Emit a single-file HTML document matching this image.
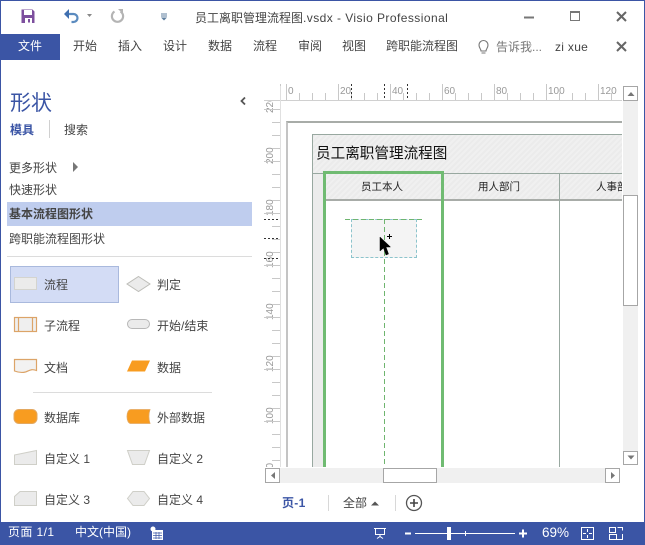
<!DOCTYPE html>
<html lang="zh"><head><meta charset="utf-8"><title>员工离职管理流程图</title>
<style>
html,body{margin:0;padding:0;width:645px;height:545px;overflow:hidden;background:#fff}
body{position:relative;font-family:"Liberation Sans","Noto Sans CJK SC",sans-serif;font-size:12px;color:#444}
.t{position:absolute;white-space:nowrap;line-height:16px;height:16px;margin-top:1px}
.b{position:absolute}
svg{position:absolute;left:0;top:0}
.hatch{background:repeating-linear-gradient(135deg,#ebebeb 0,#ebebeb 2px,#f0f0f0 2px,#f0f0f0 4px)}
.sb{position:absolute;box-sizing:border-box;background:#fff;border:1px solid #a6a6a6}
.rl{position:absolute;font-size:10px;color:#999;line-height:12px;white-space:nowrap}
.rv{position:absolute;font-size:10px;color:#999;line-height:12px;white-space:nowrap;transform:rotate(-90deg);transform-origin:0 0}
</style></head><body>

<!-- window frame -->
<div class="b" style="left:0;top:0;width:645px;height:1px;background:#3b55a5"></div>
<div class="b" style="left:0;top:0;width:1px;height:545px;background:#3b55a5"></div>
<div class="b" style="left:644px;top:0;width:1px;height:545px;background:#3b55a5"></div>

<!-- title bar -->
<div class="t" style="left:195px;top:9px;font-size:12px;color:#444">员工离职管理流程图<span style="letter-spacing:.44px">.vsdx - Visio Professional</span></div>
<div class="b" style="left:0;top:34px;width:60px;height:26px;background:#3b55a5;color:#fff;text-align:center;line-height:24px">文件</div>
<div class="t" style="left:73px;top:37px">开始</div>
<div class="t" style="left:118px;top:37px">插入</div>
<div class="t" style="left:163px;top:37px">设计</div>
<div class="t" style="left:208px;top:37px">数据</div>
<div class="t" style="left:253px;top:37px">流程</div>
<div class="t" style="left:298px;top:37px">审阅</div>
<div class="t" style="left:342px;top:37px">视图</div>
<div class="t" style="left:386px;top:37px">跨职能流程图</div>
<div class="t" style="left:496px;top:38px;color:#777">告诉我...</div>
<div class="t" style="left:555px;top:38px;letter-spacing:.3px">zi xue</div>

<!-- left pane -->
<div class="t" style="left:10px;top:90px;font-size:21px;line-height:26px;height:26px;color:#3b55a5">形状</div>
<div class="t" style="left:10px;top:121px;color:#3b55a5;font-weight:bold">模具</div>
<div class="b" style="left:49px;top:120px;width:1px;height:18px;background:#d0d0d0"></div>
<div class="t" style="left:64px;top:121px">搜索</div>
<div class="t" style="left:9px;top:159px">更多形状</div>
<div class="t" style="left:9px;top:181px">快速形状</div>
<div class="b" style="left:7px;top:202px;width:245px;height:24px;background:#bfcdee"></div>
<div class="t" style="left:9px;top:205px;font-weight:bold">基本流程图形状</div>
<div class="t" style="left:9px;top:230px">跨职能流程图形状</div>
<div class="b" style="left:7px;top:256px;width:245px;height:1px;background:#dcdcdc"></div>
<div class="b" style="left:10px;top:266px;width:109px;height:37px;box-sizing:border-box;background:#d3dcf5;border:1px solid #a9b9dd"></div>
<div class="t" style="left:44px;top:276px">流程</div>
<div class="t" style="left:157px;top:276px">判定</div>
<div class="t" style="left:44px;top:317px">子流程</div>
<div class="t" style="left:157px;top:317px">开始/结束</div>
<div class="t" style="left:44px;top:359px">文档</div>
<div class="t" style="left:157px;top:359px">数据</div>
<div class="b" style="left:33px;top:392px;width:179px;height:1px;background:#dcdcdc"></div>
<div class="t" style="left:44px;top:409px">数据库</div>
<div class="t" style="left:157px;top:409px">外部数据</div>
<div class="t" style="left:44px;top:450px">自定义 1</div>
<div class="t" style="left:157px;top:450px">自定义 2</div>
<div class="t" style="left:44px;top:491px">自定义 3</div>
<div class="t" style="left:157px;top:491px">自定义 4</div>

<!-- page / canvas -->
<div class="b" style="left:286px;top:121px;width:336px;height:346px;background:#fff;border-top:2px solid #a8aca8;border-left:2px solid #c4c4c4;box-sizing:border-box"></div>
<div class="b" style="left:312px;top:134px;width:310px;height:333px;box-sizing:border-box;border-left:1px solid #98a8a0;border-top:1px solid #98a8a0;background:#fff"></div>
<div class="b hatch" style="left:313px;top:135px;width:309px;height:38px"></div>
<div class="b" style="left:313px;top:173px;width:309px;height:1px;background:#98a8a0"></div>
<div class="b" style="left:313px;top:174px;width:11px;height:293px;background:#ececec"></div>
<div class="b hatch" style="left:324px;top:174px;width:298px;height:25px"></div>
<div class="b" style="left:324px;top:199px;width:298px;height:2px;background:#a8aca8"></div>
<div class="b" style="left:559px;top:174px;width:1px;height:293px;background:#98a8a0"></div>
<div class="t" style="left:316px;top:144px;font-size:14.6px;line-height:19px;height:19px;color:#111">员工离职管理流程图</div>
<div class="b" style="left:323px;top:171px;width:121px;height:296px;box-sizing:border-box;border:3px solid #70bb72;border-bottom:0"></div>
<div class="t" style="left:361px;top:178px;font-size:10.5px;color:#222">员工本人</div>
<div class="t" style="left:478px;top:178px;font-size:10.5px;color:#222">用人部门</div>
<div class="b" style="left:596px;top:179px;width:26px;height:16px;overflow:hidden"><div class="t" style="left:0;top:-1px;font-size:10.5px;color:#222">人事部</div></div>
<div class="b" style="left:351px;top:219px;width:66px;height:39px;box-sizing:border-box;background:#f4f4f4;border:1px dashed #8cc4cc"></div>

<!-- rulers labels -->
<div class="rl" style="left:288px;top:86px">0</div>
<div class="rl" style="left:340px;top:86px">20</div>
<div class="rl" style="left:392px;top:86px">40</div>
<div class="rl" style="left:444px;top:86px">60</div>
<div class="rl" style="left:496px;top:86px">80</div>
<div class="rl" style="left:548px;top:86px">100</div>
<div class="rl" style="left:600px;top:86px">120</div>
<div class="b" style="left:264px;top:101px;width:16px;height:12px;overflow:hidden"><div class="rv" style="left:1px;top:12px">220</div></div>
<div class="rv" style="left:265px;top:164px">200</div>
<div class="rv" style="left:265px;top:216px">180</div>
<div class="rv" style="left:265px;top:268px">160</div>
<div class="rv" style="left:265px;top:320px">140</div>
<div class="rv" style="left:265px;top:372px">120</div>
<div class="rv" style="left:265px;top:424px">100</div>
<div class="b" style="left:264px;top:455px;width:16px;height:12px;overflow:hidden"><div class="rv" style="left:1px;top:19px">80</div></div>

<!-- scrollbars -->
<div class="b" style="left:623px;top:86px;width:15px;height:379px;background:#f0f0f0"></div>
<div class="b" style="left:265px;top:468px;width:355px;height:15px;background:#f0f0f0"></div>
<div class="sb" style="left:623px;top:86px;width:15px;height:15px"></div>
<div class="sb" style="left:623px;top:195px;width:15px;height:111px"></div>
<div class="sb" style="left:623px;top:451px;width:15px;height:14px"></div>
<div class="sb" style="left:265px;top:468px;width:15px;height:15px"></div>
<div class="sb" style="left:383px;top:468px;width:54px;height:15px"></div>
<div class="sb" style="left:605px;top:468px;width:15px;height:15px"></div>

<!-- bottom tabs -->
<div class="t" style="left:282px;top:494px;font-weight:bold;color:#3b55a5;letter-spacing:.3px">页-1</div>
<div class="b" style="left:328px;top:495px;width:1px;height:16px;background:#d8d8d8"></div>
<div class="t" style="left:343px;top:494px">全部</div>
<div class="b" style="left:395px;top:495px;width:1px;height:16px;background:#d8d8d8"></div>

<!-- status bar -->
<div class="b" style="left:0;top:522px;width:645px;height:23px;background:#3b55a5"></div>
<div class="t" style="left:8px;top:523px;color:#fff;letter-spacing:.4px">页面 1/1</div>
<div class="t" style="left:75px;top:523px;color:#fff">中文(中国)</div>
<div class="t" style="left:542px;top:524px;color:#fff;font-size:13.5px">69%</div>

<svg width="645" height="545" viewBox="0 0 645 545" fill="none">
<!-- save -->
<path d="M21.500 9.500h11l2 2v11.500h-13z" fill="#7d4f9e"/>
<rect x="24" y="10" width="8" height="5" fill="#fff"/>
<rect x="25" y="18" width="7" height="5" fill="#fff"/>
<rect x="28" y="19" width="2" height="3.500" fill="#7d4f9e"/>
<!-- undo -->
<path d="M67 14h6.500a4 4 0 0 1 0 8h-2" stroke="#5b8bbf" stroke-width="2.200"/>
<path d="M64 14l5-5v10z" fill="#3f6fb0"/>
<path d="M87 14h5l-2.500 3z" fill="#888"/>
<!-- redo -->
<path d="M120.500 11.500a5.600 5.600 0 1 1-6 0" stroke="#b4b4b4" stroke-width="2.200"/>
<path d="M118 9h5v5z" fill="#b4b4b4"/>
<!-- qat caret -->
<path d="M161 14h6M161 16h6" stroke="#5f7f9f"/>
<path d="M161 17.500h6l-3 3z" fill="#5f7f9f"/>
<!-- window buttons -->
<path d="M524 17.500h10" stroke="#777" stroke-width="2"/>
<rect x="570.500" y="11.500" width="9" height="9" stroke="#777"/>
<path d="M570 12h10" stroke="#777" stroke-width="2"/>
<path d="M617 12l9 9M626 12l-9 9" stroke="#666" stroke-width="2"/>
<path d="M617 42l9 9M626 42l-9 9" stroke="#666" stroke-width="2"/>
<!-- bulb -->
<path d="M481 51c0-2-2-3-2-6a4.500 4.500 0 0 1 9 0c0 3-2 4-2 6z" stroke="#777" stroke-width="1.100"/>
<path d="M481.500 53h4" stroke="#777"/>
<!-- left pane chevrons -->
<path d="M245 97.500l-3.500 3.500 3.500 3.500" stroke="#555" stroke-width="1.800"/>
<path d="M73 162l5 5-5 5z" fill="#777"/>

<!-- shape icons -->
<rect x="14.500" y="277.500" width="22" height="12" fill="#ebebeb" stroke="#d4d4cf"/>
<path d="M138.500 276.500l11.500 7.500-11.500 7.500-11.500-7.500z" fill="#ebebeb" stroke="#bdbdb8"/>
<rect x="14.500" y="317.500" width="22" height="14" fill="#efefef" stroke="#dca468" stroke-width="1.200"/>
<path d="M18.500 317.500v14M32.500 317.500v14" stroke="#dca468" stroke-width="1.200"/>
<rect x="127.500" y="319.500" width="22" height="9" rx="4.500" fill="#ebebeb" stroke="#b8b8b8"/>
<path d="M14.500 359.500h22v11c-5-2-7 0-11 1.500-4 1-7 .5-11-1z" fill="#f2f2f2" stroke="#dca468" stroke-width="1.200"/>
<path d="M132 360.500h18l-5 11h-18z" fill="#f89c20"/>
<rect x="14" y="409.500" width="23" height="14" rx="5" fill="#f89c20" stroke="#e3a860"/>
<path d="M131 409.500h19c-1.500 4.500-1.500 9 0 14h-19c-2.500 0-4-3-4-7s1.500-7 4-7z" fill="#f89c20" stroke="#e3a860" stroke-width=".8"/>
<path d="M14.500 455l22-4.500v14h-22z" fill="#ebebeb" stroke="#cfcfc8"/>
<path d="M127.500 450.500h22l-5 14h-12z" fill="#ebebeb" stroke="#cfcfc8"/>
<path d="M20 491.500h16.500v14h-22v-9z" fill="#ebebeb" stroke="#cfcfc8"/>
<path d="M133 491.500h11l5.500 7-5.500 7h-11l-5.500-7z" fill="#ebebeb" stroke="#cfcfc8"/>

<!-- horizontal ruler ticks -->
<path d="M264 100.500H622" stroke="#d0d0d0"/>
<path d="M280.500 84V100M286.500 84V100M338.500 84V100M390.500 84V100M442.500 84V100M494.500 84V100M546.500 84V100M598.500 84V100" stroke="#c8c8c8"/>
<path d="M299.500 93V100M312.500 93V100M325.500 93V100M351.500 93V100M364.500 93V100M377.500 93V100M403.500 93V100M416.500 93V100M429.500 93V100M455.500 93V100M468.500 93V100M481.500 93V100M507.500 93V100M520.500 93V100M533.500 93V100M559.500 93V100M572.500 93V100M585.500 93V100M611.500 93V100" stroke="#c8c8c8"/>
<!-- vertical ruler ticks -->
<path d="M280.500 86V467" stroke="#e0e0e0"/>
<path d="M264 109.500H280M264 161.500H280M264 213.500H280M264 265.500H280M264 317.500H280M264 369.500H280M264 421.500H280" stroke="#c8c8c8"/>
<path d="M272 122.500H280M272 135.500H280M272 148.500H280M272 174.500H280M272 187.500H280M272 200.500H280M272 226.500H280M272 239.500H280M272 252.500H280M272 278.500H280M272 291.500H280M272 304.500H280M272 330.500H280M272 343.500H280M272 356.500H280M272 382.500H280M272 395.500H280M272 408.500H280M272 434.500H280M272 447.500H280M272 460.500H280" stroke="#c8c8c8"/>
<!-- drag markers on rulers -->
<path d="M351.500 84V100M384.500 84V100M407.500 84V100" stroke="#333" stroke-dasharray="2 2"/>
<path d="M264 219.500H280M264 238.500H280M264 258.500H280" stroke="#333" stroke-dasharray="2 2"/>

<!-- drag guides -->
<path d="M345 219.500H425" stroke="#6fb56f" stroke-dasharray="5 3"/>
<path d="M384.500 219V467" stroke="#6fb56f" stroke-dasharray="5 3"/>
<!-- cursor -->
<path d="M380 237v14l3.500-3 2.500 7 2.500-1-2.500-7h4.500z" fill="#000" stroke="#000" stroke-width=".5"/>
<path d="M389.500 234v5M387 236.500h5" stroke="#000"/>

<!-- scroll arrows -->
<path d="M627.500 96h7l-3.500-4z" fill="#777"/>
<path d="M627.500 455.500h7l-3.500 4z" fill="#777"/>
<path d="M275 472v7l-4-3.500z" fill="#777"/>
<path d="M611 472v7l4-3.500z" fill="#777"/>

<!-- bottom tabs icons -->
<path d="M371 505.500h8l-4-4z" fill="#555"/>
<circle cx="414" cy="503" r="7.500" stroke="#555" stroke-width="1.300"/>
<path d="M410 503h8M414 499v8" stroke="#444" stroke-width="1.600"/>

<!-- status icons -->
<circle cx="153" cy="529" r="2.500" fill="#fff"/>
<rect x="152" y="530" width="11" height="10" fill="#fff"/>
<path d="M153 533h9M153 535.500h9M153 538h9M156 532v7M159 532v7" stroke="#3b55a5" stroke-width=".7"/>
<path d="M374 528.500h12M375.500 528.500v6h9v-6M380 534.500v2M377 538.500l3-2 3 2" stroke="#fff"/>
<path d="M405 533.500h6" stroke="#fff" stroke-width="2"/>
<path d="M415 533.500h100" stroke="#fff"/>
<rect x="447" y="527" width="4" height="13" fill="#fff"/>
<path d="M465.500 531v5" stroke="#fff"/>
<path d="M519 533.500h8M523 529.500v8" stroke="#fff" stroke-width="2"/>
<rect x="581.500" y="527.500" width="12" height="12" stroke="#fff"/>
<path d="M587.500 529v3M587.500 535v3M583 533.500h3M589 533.500h3" stroke="#fff"/>
<path d="M609.500 532.500v-5h6v5zM617.500 527.500h5v3M622.500 534v5.500h-13v-5h7v5" stroke="#fff"/>
</svg>
</body></html>
